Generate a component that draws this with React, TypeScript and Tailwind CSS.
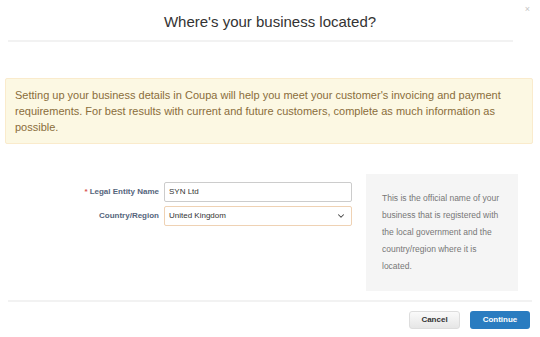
import { ChevronDown } from "lucide-react";

export default function App() {
  return (
    <div
      className="relative w-[540px] h-[337px] bg-white px-[5px] overflow-hidden"
      style={{ fontFamily: '"Liberation Sans", Arial, sans-serif' }}
    >
      {/* Close */}
      <button className="absolute right-[10px] top-[5px] text-[9px] text-[#c4c4c4] leading-none">
        ×
      </button>

      {/* Header */}
      <div className="h-[40px] flex items-center justify-center pt-[4px]">
        <h1 className="text-[15px] text-[#333]">Where's your business located?</h1>
      </div>
      <div className="mx-[3px] mr-[22px] h-[2px] bg-[#f2f2f2]" />

      {/* Alert */}
      <div className="mt-[36px] mr-[2px] rounded-[2px] border border-[#faebcc] bg-[#fcf8e3] px-[9px] py-[8px] text-[11px] leading-[16px] text-[#8a6d3b]">
        Setting up your business details in Coupa will help you meet your customer's invoicing and payment
        requirements. For best results with current and future customers, complete as much information as
        possible.
      </div>

      {/* Form */}
      <div className="mt-[30px] flex pl-[55px]">
        <div className="pt-[8px] flex flex-col gap-[4px]">
          <div className="flex items-center h-[20px]">
            <label className="w-[99px] text-right text-[8px] font-bold text-[#55657c]">
              <span className="text-[#d9534f] mr-[2px]">*</span>Legal Entity Name
            </label>
            <div className="ml-[5px] w-[188px] h-[20px] rounded-[2px] border border-[#ccc] bg-white px-[4px] flex items-center text-[8px] text-[#333]">
              SYN Ltd
            </div>
          </div>
          <div className="flex items-center h-[20px]">
            <label className="w-[99px] text-right text-[8px] font-bold text-[#55657c]">
              Country/Region
            </label>
            <div className="ml-[5px] w-[188px] h-[20px] rounded-[2px] border border-[#efd2b4] bg-white pl-[4px] pr-[5px] flex items-center justify-between text-[8px] text-[#333]">
              <span>United Kingdom</span>
              <ChevronDown className="w-[10px] h-[10px] text-[#444]" strokeWidth={2.5} />
            </div>
          </div>
        </div>
        <div className="ml-[14px] w-[152px] h-[117px] bg-[#f5f5f5] pl-[16px] pr-[14px] pt-[16px] text-[8.5px] leading-[17px] text-[#777]">
          This is the official name of your business that is registered with the local government and the
          country/region where it is located.
        </div>
      </div>

      {/* Footer */}
      <div className="mt-[9px] mx-[3px] h-[2px] bg-[#f2f2f2]" />
      <div className="mt-[9px] flex justify-end gap-[10px] pr-[5px]">
        <button className="w-[51px] h-[18px] rounded-[3px] border border-[#ddd] bg-gradient-to-b from-[#fafafa] to-[#e6e6e6] text-[8px] font-bold text-[#333]">
          Cancel
        </button>
        <button className="w-[60px] h-[18px] rounded-[3px] bg-[#2a7cc0] text-[8px] font-bold text-white">
          Continue
        </button>
      </div>
    </div>
  );
}
